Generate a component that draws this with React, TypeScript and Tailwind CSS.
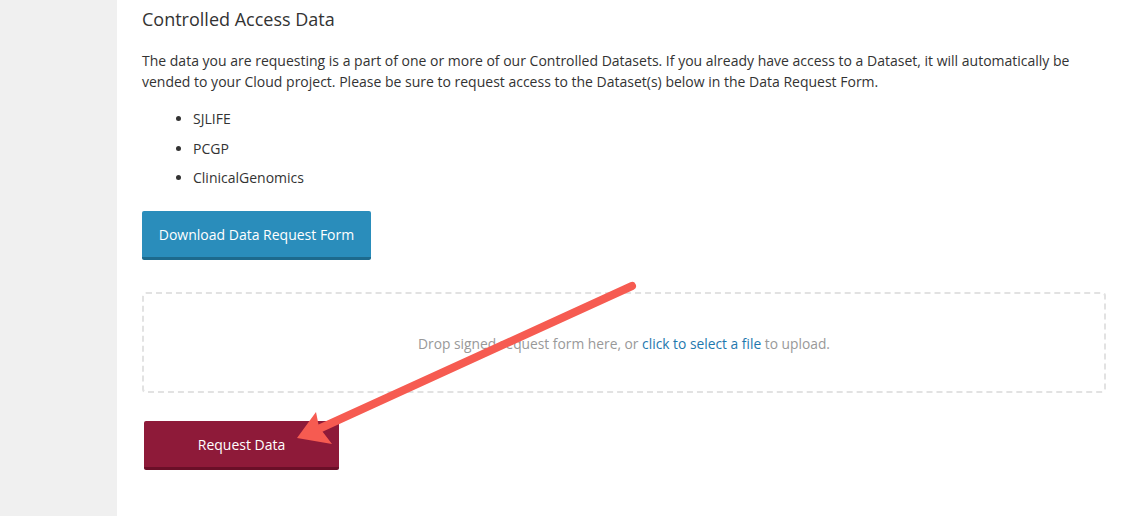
import React from "react";

export default function App() {
  return (
    <div className="flex w-[1125px] h-[516px] overflow-hidden bg-white relative" style={{ fontFamily: '"Open Sans", sans-serif' }}>
      <div className="w-[117px] shrink-0 bg-[#f0f0f0]" />
      <div className="pl-[25px] pr-[19px] flex-1 text-[#333]">
        <h2 className="text-[18px] leading-[24px] mt-[7px] text-[#333]">Controlled Access Data</h2>
        <p className="text-[14px] leading-[21px] mt-[19px] text-[#333]">
          The data you are requesting is a part of one or more of our Controlled Datasets. If you already have access to a Dataset, it will automatically be vended to your Cloud project. Please be sure to request access to the Dataset(s) below in the Data Request Form.
        </p>
        <ul className="mt-[16px] pl-[51px] text-[14px] leading-[21px] list-disc flex flex-col gap-[8.5px]">
          <li>SJLIFE</li>
          <li>PCGP</li>
          <li>ClinicalGenomics</li>
        </ul>
        <button className="mt-[23px] h-[49px] w-[229px] bg-[#2a8dbb] text-white text-[14px] rounded-[2px] border-b-[3px] border-[#1d6a8d] flex items-center justify-center">
          Download Data Request Form
        </button>
        <div className="mt-[32px] h-[101px] w-[964px] pt-[3px] border-2 border-dashed border-[#e2e2e2] rounded-[4px] flex items-center justify-center text-[13.8px] text-[#999]">
          <span>
            Drop signed request form here, or <span className="text-[#1e78ae]">click to select a file</span> to upload.
          </span>
        </div>
        <button className="mt-[28px] ml-[2px] h-[49px] w-[195px] bg-[#8e1a39] text-white text-[14px] rounded-[2px] border-b-[3px] border-[#6a0f28] flex items-center justify-center">
          Request Data
        </button>
      </div>
      <svg className="absolute left-0 top-0 pointer-events-none" width="1125" height="516">
        <line x1="632" y1="286" x2="312" y2="432" stroke="#f65b51" strokeWidth="8" strokeLinecap="round" />
        <polygon points="297,438 316,412 319,427 332,444" fill="#f65b51" />
      </svg>
    </div>
  );
}
